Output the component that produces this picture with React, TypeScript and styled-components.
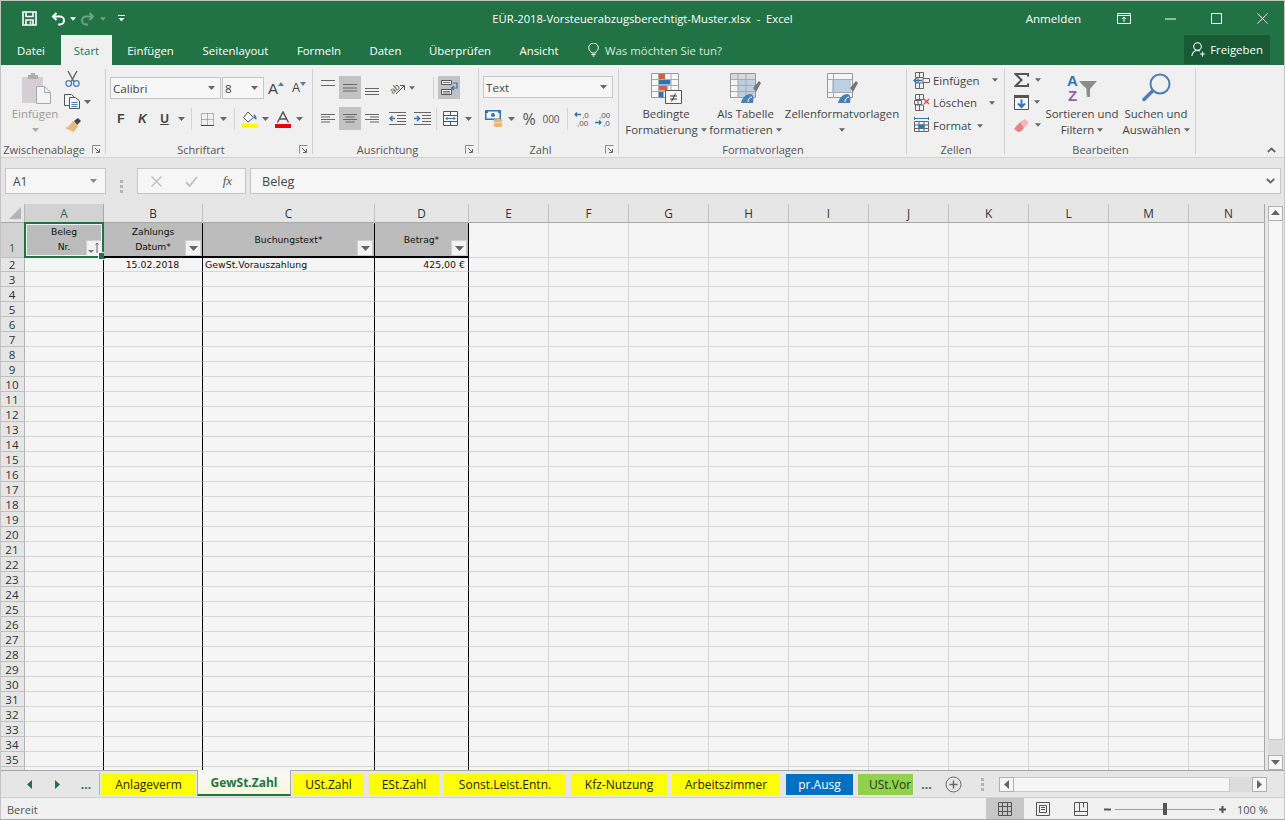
import React from "react";
import styled, { createGlobalStyle } from "styled-components";

const UI = `"Open Sans", "Noto Sans", "Liberation Sans", sans-serif`;
const GREEN = "#217346";

const Global = createGlobalStyle`
  html, body { margin: 0; padding: 0; overflow: hidden; background: #f0f0f0; }
  #root { width: 1285px; height: 820px; }
  * { box-sizing: border-box; }
`;

const Window = styled.div`
  position: relative; width: 1285px; height: 820px; display: flex; flex-direction: column;
  font-family: ${UI}; color: #444; overflow: hidden; background: #f0f0f0;
  &::after { content: ""; position: absolute; inset: 0; border: 1px solid #c4c4c4; border-bottom-color: #a8a8a8; pointer-events: none; }
`;

/* ---------- title ---------- */
const TitleBar = styled.header`
  height: 35px; flex: none; background: ${GREEN}; display: grid; grid-template-columns: 1fr auto 1fr;
  align-items: center; color: #fff; padding-top: 2px;
`;
const Quick = styled.div`display: flex; align-items: center; padding-left: 22px;`;
const QSlot = styled.span<{ $w: number; $dim?: boolean }>`
  width: ${p => p.$w}px; display: flex; justify-content: center; align-items: center; opacity: ${p => (p.$dim ? 0.35 : 1)};
`;
const WinTitle = styled.div`font-size: 11.2px; white-space: pre; color: #fff; margin-top: -1px;`;
const WinRight = styled.div`display: flex; align-items: center; justify-content: flex-end;`;
const SignIn = styled.span`font-size: 11.6px; margin-right: 20px;`;
const WinBtn = styled.span<{ $w: number }>`width: ${p => p.$w}px; display: flex; justify-content: center;`;

const TabsBar = styled.nav`
  height: 30px; flex: none; background: ${GREEN}; display: flex; align-items: stretch; color: #fff; padding: 0 15px 0 1px;
`;
const RTab = styled.div<{ $w: number; $on?: boolean }>`
  width: ${p => p.$w}px; display: flex; align-items: center; justify-content: center; font-size: 11.4px;
  background: ${p => (p.$on ? "#f0f0f0" : "transparent")}; color: ${p => (p.$on ? GREEN : "#fff")};
`;
const TellMe = styled.div`
  display: flex; align-items: center; gap: 6px; margin-left: 15px; font-size: 11.4px; color: #d8e8de; flex: 1;
`;
const Share = styled.div`
  width: 86px; background: #185a36; display: flex; align-items: center; justify-content: center; gap: 4px; font-size: 11.4px; margin-bottom: 1px;
`;

/* ---------- ribbon ---------- */
const Ribbon = styled.section`
  height: 93px; flex: none; display: flex; background: #f0f0f0; border-bottom: 1px solid #d2d2d2; padding: 4px 0 3px;
`;
const Group = styled.div<{ $w: number }>`
  width: ${p => p.$w}px; flex: none; display: flex; flex-direction: column; margin-right: 1px; border-right: 1px solid #d0d0d0;
`;
const GroupBody = styled.div<{ $pl?: number; $pt?: number }>`
  height: 72px; flex: none; display: flex; padding-left: ${p => p.$pl ?? 0}px; padding-top: ${p => p.$pt ?? 0}px;
`;
const GroupFoot = styled.div<{ $launch?: boolean }>`
  display: grid; grid-template-columns: ${p => (p.$launch ? "1fr 17px" : "1fr")}; align-items: center; height: 14px; margin-top: 1px;
  font-size: 11px; color: #555; text-align: center; white-space: nowrap;
`;
const Launcher = styled.span`display: flex; justify-content: center; padding-right: 1px;`;
const Stack = styled.div<{ $gap?: number; $w?: number }>`
  display: flex; flex-direction: column; gap: ${p => p.$gap ?? 0}px; ${p => (p.$w ? `width:${p.$w}px;` : "")}
`;
const Row = styled.div<{ $h?: number }>`display: flex; align-items: center; height: ${p => p.$h ?? 22}px;`;
const Slot = styled.span<{ $w: number; $on?: boolean; $h?: number }>`
  width: ${p => p.$w}px; height: ${p => p.$h ?? 23}px; flex: none; display: flex; align-items: center; justify-content: center;
  background: ${p => (p.$on ? "#c2c2c2" : "transparent")};
`;
const Divider = styled.span`width: 1px; height: 22px; background: #d4d4d4; flex: none;`;
const Combo = styled.div<{ $w: number }>`
  width: ${p => p.$w}px; height: 22px; background: #f6f6f6; border: 1px solid #c6c6c6; flex: none;
  display: flex; align-items: center; justify-content: space-between; padding: 0 5px 0 2px; font-size: 11.6px; color: #444;
`;
const GlyphBtn = styled.span<{ $style?: string }>`
  font-size: 12px; font-weight: 700; color: #444; font-family: "Liberation Sans", sans-serif; ${p => p.$style ?? ""}
`;
const BigBtn = styled.div<{ $w: number; $ml?: number; $dim?: boolean }>`
  width: ${p => p.$w}px; margin-left: ${p => p.$ml ?? 0}px; flex: none; display: flex; flex-direction: column; align-items: center;
  font-size: 11.4px; line-height: 16px; color: ${p => (p.$dim ? "#9a9a9a" : "#444")}; white-space: nowrap; text-align: center;
`;
const BigIcon = styled.span<{ $pt?: number; $dx?: number }>`
  height: ${p => 31 + (p.$pt ?? 0)}px; padding-top: ${p => p.$pt ?? 0}px; padding-left: ${p => p.$dx ?? 0}px;
  display: flex; align-items: flex-start; justify-content: center; margin-bottom: 2px;
`;
const Line = styled.span`display: flex; align-items: center; justify-content: center; gap: 3px; height: 16px;`;
const ListRow = styled.div<{ $gapEnd: number }>`
  display: flex; align-items: center; height: 23px; font-size: 11.4px; gap: 3px; color: #444;
  &:first-child { height: 22px; }
  & > :last-child { margin-left: ${p => p.$gapEnd}px; }
`;
const Collapse = styled.div`flex: 1; display: flex; align-items: flex-end; justify-content: flex-end; padding: 0 9px 1px 0;`;

/* ---------- formula ---------- */
const FormulaBar = styled.div`
  height: 46px; flex: none; background: #e6e6e6; display: flex; align-items: flex-start; padding: 10px 4px 0 5px;
`;
const NameBox = styled.div`
  width: 101px; height: 26px; background: #f6f6f6; border: 1px solid #c6c6c6; display: flex; align-items: center; justify-content: space-between;
  padding: 0 7px 0 7px; font-size: 12px; color: #444;
`;
const FxDots = styled.span`width: 31px; display: flex; justify-content: center; align-self: center;`;
const FxBox = styled.div`
  width: 109px; height: 26px; background: #f6f6f6; border: 1px solid #c6c6c6; display: flex; align-items: center; padding-left: 1px; gap: 0;
`;
const FxSlot = styled.span`width: 36px; display: flex; justify-content: center; align-items: center; color: #555; font: italic 13px "Liberation Serif", serif;`;
const FormulaInput = styled.div`
  flex: 1; height: 26px; margin-left: 4px; background: #f6f6f6; border: 1px solid #c6c6c6; display: flex; align-items: center; justify-content: space-between;
  padding: 0 5px 0 11px; font-size: 12.6px; color: #444;
`;

/* ---------- sheet ---------- */
const SheetWrap = styled.div`height: 567px; flex: none; display: flex; background: #e6e6e6; border-bottom: 1px solid #a6a6a6;`;
const GridClip = styled.div`width: 1265px; height: 566px; overflow: hidden; flex: none; border-right: 1px solid #a8a8a8;`;
const Grid = styled.div`
  display: grid;
  grid-template-columns: 25px 79px 99px 172px 94px repeat(10, 80px);
  grid-template-rows: 19px 35px 14px repeat(34, 15px);
  background: #f5f5f5;
`;
const Corner = styled.div`
  background: #e6e6e6; border-right: 1px solid #b5b5b5; border-bottom: 1px solid #a8a8a8; display: flex; align-items: flex-end; justify-content: flex-end; padding: 0 3px 3px 0;
`;
const ColHead = styled.div<{ $sel?: boolean }>`
  background: ${p => (p.$sel ? "#d2d2d2" : "#e6e6e6")}; color: ${p => (p.$sel ? GREEN : "#333")};
  border-right: 1px solid ${p => (p.$sel ? "#a8a8a8" : "#c0c0c0")}; border-bottom: 1px solid #a8a8a8;
  display: flex; align-items: center; justify-content: center; font-size: 11.8px;
`;
const RowHead = styled.div<{ $sel?: boolean }>`
  background: ${p => (p.$sel ? "#d2d2d2" : "#e6e6e6")}; color: ${p => (p.$sel ? GREEN : "#333")};
  border-right: 1px solid #b5b5b5; border-bottom: 1px solid #c0c0c0; padding-bottom: ${p => (p.$sel ? 3 : 0)}px;
  display: flex; align-items: flex-end; justify-content: center; font-size: 11.6px; line-height: 12px;
`;
const Cell = styled.div<{ $black?: boolean }>`
  border-right: 1px solid ${p => (p.$black ? "#000" : "#d6d6d6")}; border-bottom: 1px solid #d6d6d6;
  font: 9.4px/14px "DejaVu Sans", sans-serif; color: #111; white-space: nowrap; overflow: hidden; display: flex; align-items: center; padding: 0 2px;
`;
const DataCell = styled(Cell) <{ $al?: string }>`justify-content: ${p => p.$al ?? "flex-start"}; padding: 1px 3px 0 2px;`;
const HeadCell = styled.div`
  position: relative; background: #bcbcbc; border-right: 1px solid #000; border-bottom: 2px solid #000;
  font: 9.2px/15px "DejaVu Sans", sans-serif; color: #111; text-align: center; display: flex; flex-direction: column; justify-content: center; padding-bottom: 1px;
`;
const Filter = styled.span`
  position: absolute; right: 1px; bottom: 0; width: 16px; height: 16px; background: #f2f2f2; border: 1px solid #cfcfcf; display: flex; align-items: center; justify-content: center;
`;
const Selection = styled.div`
  position: absolute; left: -1px; top: -1px; width: 80px; height: 36px; border: 2px solid ${GREEN}; box-shadow: inset 0 0 0 1px #f4f4f4; pointer-events: none;
  &::after { content: ""; position: absolute; right: -4px; bottom: -4px; width: 6px; height: 6px; background: ${GREEN}; border: 1px solid #fff; }
`;

const VScroll = styled.div`flex: 1; display: flex; flex-direction: column; padding: 2px 2px 0 3px;`;
const SBtn = styled.div`height: 15px; background: #f6f6f6; border: 1px solid #b0b0b0; display: flex; align-items: center; justify-content: center; flex: none;`;
const VThumb = styled.div`flex: 1; background: #f6f6f6; border: 1px solid #c8c8c8; border-top: none;`;
const VTrack = styled.div`height: 15px; background: #dcdcdc; flex: none;`;

/* ---------- sheet tabs ---------- */
const TabBar = styled.div`height: 26px; flex: none; display: flex; align-items: stretch; background: #e6e6e6; font-size: 12px;`;
const NavSlot = styled.span<{ $w: number }>`width: ${p => p.$w}px; display: flex; align-items: center; justify-content: center; color: ${GREEN}; font-weight: 700; font-size: 12px; flex: none;`;
const TabSep = styled.span`width: 1px; height: 22px; background: #b0b0b0; align-self: center; flex: none;`;
const Sheet = styled.div<{ $w: number; $bg?: string; $fg?: string; $ml?: number; $cut?: boolean }>`
  width: ${p => p.$w}px; flex: none; margin: 3px 0 2px ${p => p.$ml ?? 2}px; background: ${p => p.$bg ?? "#ffff00"}; color: ${p => p.$fg ?? "#222"};
  display: flex; align-items: center; justify-content: ${p => (p.$cut ? "flex-start" : "center")}; padding-left: ${p => (p.$cut ? 11 : 0)}px;
  font-size: 12px; white-space: nowrap; overflow: hidden;
`;
const ActiveSheet = styled.div<{ $w: number }>`
  width: ${p => p.$w}px; flex: none; margin-left: 2px; background: linear-gradient(#f7f7f7, #f7f7dc); color: ${GREEN}; font-weight: 700; font-size: 12px;
  border-bottom: 2px solid ${GREEN}; border-left: 1px solid #a8a8a8; border-right: 1px solid #a8a8a8; margin-top: -1px; height: 26px;
  display: flex; align-items: center; justify-content: center;
`;
const HScroll = styled.div`width: 268px; margin-left: 2px; flex: none; display: flex; align-items: center;`;
const HBtn = styled.div`width: 15px; height: 15px; background: #f6f6f6; border: 1px solid #b0b0b0; display: flex; align-items: center; justify-content: center; flex: none;`;
const HThumb = styled.div`width: 216px; height: 15px; background: #f6f6f6; border: 1px solid #c8c8c8; border-left: none; flex: none;`;
const HTrack = styled.div`flex: 1; height: 15px; background: #dcdcdc;`;

/* ---------- status ---------- */
const Status = styled.footer`
  flex: 1; display: flex; align-items: stretch; background: #f0f0f0; border-top: 1px solid #d0d0d0; font-size: 11px; color: #555; padding-left: 7px;
`;
const StatusText = styled.span`align-self: center; flex: 1;`;
const ViewBtn = styled.span<{ $on?: boolean; $w: number }>`
  width: ${p => p.$w}px; background: ${p => (p.$on ? "#c6c6c6" : "transparent")}; display: flex; align-items: center; justify-content: center;
`;
const ZoomWrap = styled.div`display: flex; align-items: center; margin-left: 4px; width: 130px; gap: 2px;`;
const ZoomTrack = styled.div`position: relative; width: 100px; height: 1px; background: #9a9a9a; flex: none; margin: 0 2px;`;
const ZoomThumb = styled.span`position: absolute; left: 48px; top: -6px; width: 4px; height: 12px; background: #555;`;
const ZoomVal = styled.span`width: 51px; align-self: center; padding-left: 3px; flex: none; font-size: 11px;`;
const MiniTri = styled.svg`align-self: flex-start; margin: 5px 0 0 0;`;

/* ---------- icons ---------- */
const Caret = ({ c = "#666", s = 7 }: { c?: string; s?: number }) => (
  <svg width={s} height={4} viewBox="0 0 7 4"><path d="M0 0h7L3.500 4z" fill={c} /></svg>
);
const Launch = () => (
  <svg width="9" height="9" viewBox="0 0 9 9"><path d="M.5 8.500V.5h8" fill="none" stroke="#8a8a8a" /><path d="M3 3l4 4M7.500 4v3.500H4" fill="none" stroke="#666" /></svg>
);
const Save = () => (
  <svg width="15" height="15" viewBox="0 0 15 15" fill="none" stroke="#fff" strokeWidth="1.600">
    <path d="M1 1h13v13H1z" /><path d="M4 1v4.500h7V1" /><path d="M4 14V9h7v5" /><path d="M8.500 10.500v2.500" />
  </svg>
);
const Undo = ({ c = "#fff", flip = false }: { c?: string; flip?: boolean }) => (
  <svg width="15" height="14" viewBox="0 0 15 14" fill="none" stroke={c} strokeWidth="2" style={flip ? { transform: "scaleX(-1)" } : undefined}>
    <path d="M5.500 1L2 4.500 5.500 8" /><path d="M2.500 4.500H9a4 4 0 0 1 0 8H7" />
  </svg>
);
const Customize = () => (
  <svg width="7" height="7" viewBox="0 0 7 7"><path d="M0 .5h7" stroke="#fff" /><path d="M.5 3h6L3.500 6.500z" fill="#fff" /></svg>
);
const Restore = () => (
  <svg width="14" height="11" viewBox="0 0 14 11" fill="none" stroke="#fff"><path d="M.5.500h13v10H.5z" /><path d="M.5 2.500h13" /><path d="M7 9V4M5 6l2-2 2 2" /></svg>
);
const Minimize = () => <svg width="11" height="2" viewBox="0 0 11 2"><path d="M0 1h11" stroke="#fff" /></svg>;
const Maximize = () => <svg width="11" height="11" viewBox="0 0 11 11"><path d="M.5.500h10v10H.5z" fill="none" stroke="#fff" /></svg>;
const Close = () => <svg width="11" height="11" viewBox="0 0 11 11"><path d="M.5.500l10 10M10.500.500l-10 10" stroke="#fff" fill="none" /></svg>;
const Bulb = () => (
  <svg width="11" height="14" viewBox="0 0 11 14" fill="none" stroke="#fff"><path d="M3.500 10C3 8 .7 7.500.7 4.800a4.800 4.800 0 0 1 9.600 0C10.300 7.500 8 8 7.500 10z" /><path d="M3.500 11.500h4M4.500 13h2" /></svg>
);
const Person = () => (
  <svg width="15" height="15" viewBox="0 0 15 15" fill="none" stroke="#fff" strokeWidth="1.100"><circle cx="6.500" cy="4.500" r="3.800" /><path d="M.8 14c.6-3.500 2.700-5.500 5.700-5.500 1 0 1.800.2 2.500.6" /><path d="M11.500 9.500v5M9 12h5" /></svg>
);
const Paste = () => (
  <svg width="29" height="31" viewBox="0 0 29 31">
    <path d="M0 4h21v26H0z" fill="#d3cfd3" /><path d="M6 2h3V0h4v2h3v4H6z" fill="#b0acb0" />
    <path d="M14.500 13.500h8l6 6v11h-14z" fill="#f4f4f4" stroke="#a8a8a8" /><path d="M22.500 13.500v6h6" fill="none" stroke="#a8a8a8" />
  </svg>
);
const Cut = () => (
  <svg width="15" height="16" viewBox="0 0 15 16" fill="none">
    <path d="M3 0l6 11M12 0L6 11" stroke="#666" strokeWidth="1.400" /><circle cx="3.700" cy="12.500" r="2.800" stroke="#4a7fb5" strokeWidth="1.300" /><circle cx="11.300" cy="12.500" r="2.800" stroke="#4a7fb5" strokeWidth="1.300" />
  </svg>
);
const Copy = () => (
  <svg width="16" height="15" viewBox="0 0 16 15" fill="#f4f4f4" stroke="#555">
    <path d="M.5.500h7l3 3v8H.5z" /><path d="M5.500 3.500h6l4 3.500v7.500h-10z" /><path d="M7.500 8.500h6M7.500 10.500h6M7.500 12.500h6" stroke="#4a7fb5" />
  </svg>
);
const Brush = () => (
  <svg width="17" height="14" viewBox="0 0 17 14">
    <path d="M10 3l4-3 3 3-4 4z" fill="#444" /><path d="M9 3l5 5-4 6-9-4 3-1z" fill="#e5b77b" />
  </svg>
);
const Borders = () => (
  <svg width="13" height="13" viewBox="0 0 13 13" fill="none" stroke="#777" strokeDasharray="1 1"><path d="M.5.500h12v12H.5z" /><path d="M6.500.500v12M.5 6.500h12" /><path d="M0 12.500h13" stroke="#444" strokeDasharray="none" /></svg>
);
const Fill = () => (
  <svg width="16" height="17" viewBox="0 0 16 17"><path d="M6 1l5.500 5.500L6 11 1.500 6.500z" fill="#f6f6f6" stroke="#555" /><path d="M12 3c2 1.500 3 4 2.500 5.500-1.500 0-2.500-1-3-2z" fill="#4a7fb5" /><path d="M0 13h16v4H0z" fill="#ffff00" /></svg>
);
const FontColor = () => (
  <svg width="16" height="17" viewBox="0 0 16 17"><path d="M2.500 11.500L8 1l5.500 10.500M4.500 8h7" fill="none" stroke="#555" strokeWidth="1.500" /><path d="M0 13h16v4H0z" fill="#e8000b" /></svg>
);
const Lines = ({ kind }: { kind: "top" | "mid" | "bot" | "l" | "c" | "r" }) => {
  const rows: [number, number][] =
    kind === "top" ? [[.5, 14], [5.500, 14]] :
      kind === "mid" ? [[4.500, 14], [8, 14], [11, 14]] :
        kind === "bot" ? [[8.500, 14], [11.500, 14], [14.500, 14]] :
          [[3.500, 14], [6, 9], [8.500, 14], [11, 9]];
  return (
    <svg width="14" height="15" viewBox="0 0 14 15">
      {rows.map(([y, l], i) => {
        const x = kind === "r" ? 14 - l : kind === "c" ? (14 - l) / 2 : 0;
        return <path key={i} d={`M${x} ${y}h${l}`} stroke="#666" />;
      })}
    </svg>
  );
};
const Orient = () => (
  <svg width="17" height="15" viewBox="0 0 17 15" fill="none"><text x="1" y="12" fontSize="9" fontFamily="Liberation Sans" fill="#555" transform="rotate(-40 6 8)">ab</text><path d="M8 14l8-8M12 5.500h4.500V10" stroke="#555" /></svg>
);
const Wrap = () => (
  <svg width="17" height="16" viewBox="0 0 17 16" fill="none"><path d="M.5.500h10v4H.5zM.5 9.500h10v5H.5z" stroke="#555" fill="#f0f0f0" /><path d="M2 2.500h7M2 11.500h7M2 13h7" stroke="#777" /><path d="M12 3h4v5h-5M13 6l-2.500 2 2.500 2" stroke="#2f75b5" strokeWidth="1.200" /></svg>
);
const Indent = ({ dir }: { dir: "in" | "out" }) => (
  <svg width="17" height="13" viewBox="0 0 17 13" fill="none" stroke="#666">
    <path d="M0 .5h17M8 3.500h9M8 6.500h9M8 9.500h9M0 12.500h17" />
    <path d={dir === "out" ? "M6 6.500H1M3.500 4L1 6.500 3.500 9" : "M0 6.500h5M3 4l2.500 2.500L3 9"} stroke="#2f75b5" strokeWidth="1.500" />
  </svg>
);
const Merge = () => (
  <svg width="15" height="15" viewBox="0 0 15 15" fill="#f6f6f6" stroke="#555"><path d="M.5.500h14v14H.5z" /><path d="M.5 4.500h14M.5 10.500h14M7.500.500v4M7.500 10.500v4" /><path d="M3 7.500h9M4.500 6L3 7.500 4.500 9M10.500 6L12 7.500 10.500 9" stroke="#2f75b5" /></svg>
);
const Currency = () => (
  <svg width="18" height="17" viewBox="0 0 18 17">
    <path d="M0 0h16v10H0z" fill="#2f75b5" /><path d="M1.500 1.500h13v7h-13z" fill="#f4f4f4" /><path d="M0 0h3v3H0zM13 0h3v3h-3z" fill="#2f75b5" /><circle cx="8" cy="5" r="2" fill="#2f75b5" />
    <ellipse cx="13" cy="10.500" rx="4.500" ry="1.800" fill="#e9b56b" /><ellipse cx="13" cy="13" rx="4.500" ry="1.800" fill="#f1c88f" /><ellipse cx="13" cy="15.200" rx="4.500" ry="1.800" fill="#e9b56b" />
  </svg>
);
const Decimal = ({ inc }: { inc: boolean }) => (
  <svg width="18" height="16" viewBox="0 0 18 16" fill="none">
    <text x={inc ? 8 : 4} y="7" fontSize="8" fontFamily="Liberation Sans" fill="#555">{inc ? ",0" : ",00"}</text>
    <text x={inc ? 3 : 8} y="15" fontSize="8" fontFamily="Liberation Sans" fill="#555">{inc ? ",00" : ",0"}</text>
    <path d={inc ? "M7 3.500H1M3 1.500L1 3.500l2 2" : "M0 11.500h6M4 9.500l2 2-2 2"} stroke="#2f75b5" strokeWidth="1.300" />
  </svg>
);
const CondFormat = () => (
  <svg width="31" height="32" viewBox="0 0 31 32">
    <path d="M.5.500h27v24H.5z" fill="#f7f7f7" stroke="#999" />
    <path d="M7.500 1h6.500v5H7.500z" fill="#d2613f" /><path d="M7.500 6.500h12v5H7.500z" fill="#2f75b5" /><path d="M7.500 12.500h9v5H7.500z" fill="#d2613f" /><path d="M7.500 18.500h5v6H7.500z" fill="#2f75b5" />
    <path d="M7.500 1v24M20 1v24M1 6.500h26M1 12.500h26M1 18.500h26" stroke="#aaa" fill="none" />
    <path d="M14.500 17.500h16v13h-16z" fill="#f7f7f7" stroke="#555" /><path d="M19 23h7M19 26h7M24.500 20.500l-4 8" stroke="#333" fill="none" />
  </svg>
);
const TableFmt = ({ cells }: { cells?: boolean }) => (
  <svg width="31" height="31" viewBox="0 0 31 31">
    <path d="M.5.500h25v24H.5z" fill="#f4f4f4" stroke="#999" />
    {cells
      ? <path d="M5 6h19v14H5z" fill="#bccfe3" />
      : <><path d="M8 7h17v17H8z" fill="#bccfe3" /><path d="M1 1h24v5.500H1z" fill="#d9d9d9" /></>}
    <path d={cells ? "M6.500 1v24M1 6.500h24M1 19.500h24" : "M8 1v24M16 1v24M1 6.500h24M1 12.500h24M1 18.500h24"} stroke="#aaa" fill="none" />
    <path d="M11 30c1-5 5-9 9-9 3 0 4 3 3 9z" fill="#4a7fb5" /><path d="M18 29c0-3 2-5 4-5" stroke="#fff" fill="none" />
    <path d="M23 15l6-7 2 2-5 9z" fill="#777" />
  </svg>
);
const CellsIcon = ({ kind }: { kind: "ins" | "del" | "fmt" }) => (
  <svg width="17" height="17" viewBox="0 0 17 17" fill="none" stroke="#666">
    {kind === "fmt" ? (
      <>
        <path d="M1.500 4.500h14v10h-14zM6 4.500v10M11 4.500v10M1.500 8h14M1.500 11.500h14" /><path d="M6 8h5v3.500H6z" fill="#2f75b5" stroke="#2f75b5" />
        <path d="M1.500 1.500h14" stroke="#2f75b5" /><path d="M1.500 0v3M15.500 0v3" stroke="#2f75b5" />
      </>
    ) : (
      <>
        <path d="M2.500.500h8v5h-8zM6.500.500v5M2.500 11h8v5.500h-8zM6.500 11v5.500M5 6v5" />
        {kind === "ins"
          ? <><path d="M9 8.500H1M3.500 6L1 8.500 3.500 11" stroke="#2f75b5" strokeWidth="1.300" /><path d="M10 6.500h6.500v4H10z" /></>
          : <><path d="M1.500 6.500h7v4h-7z" /><path d="M11 5l5 5M16 5l-5 5" stroke="#d9534f" strokeWidth="1.500" /></>}
      </>
    )}
  </svg>
);
const Sigma = () => <svg width="15" height="14" viewBox="0 0 15 14"><path d="M14 3.500V1H1.500L7.500 7 1.500 13H14v-2.500" fill="none" stroke="#555" strokeWidth="2" /></svg>;
const FillDown = () => (
  <svg width="15" height="15" viewBox="0 0 15 15"><path d="M0 0h15v15H0z" fill="#f4f4f4" /><path d="M.5.500h14v14H.5z" fill="none" stroke="#555" /><path d="M0 0h15v3H0z" fill="#555" /><path d="M7.500 4.500v7M4 8.500l3.500 3.500L11 8.500" fill="none" stroke="#2f75b5" strokeWidth="2" /></svg>
);
const Eraser = () => (
  <svg width="15" height="13" viewBox="0 0 15 13"><path d="M6 3l5-3 4 4-5 5z" fill="#f5b5bd" /><path d="M6 3l4 6-3 3.500-3 .5-4-3z" fill="#e87f8b" /></svg>
);
const SortFilter = () => (
  <svg width="30" height="31" viewBox="0 0 30 31">
    <text x="0" y="13" fontSize="15" fontWeight="700" fontFamily="Liberation Sans" fill="#2f75b5">A</text>
    <text x="1" y="28" fontSize="15" fontWeight="700" fontFamily="Liberation Sans" fill="#8e5fb0">Z</text>
    <path d="M12 8h18l-7 8v8h-4v-8z" fill="#8c8c8c" /><path d="M17 13.500l2 2.500v7h1.500" fill="none" stroke="#f4f4f4" />
  </svg>
);
const Search = () => (
  <svg width="29" height="29" viewBox="0 0 29 29" fill="none"><circle cx="18" cy="11" r="9.500" stroke="#4a7fb5" strokeWidth="2" /><path d="M10.500 18L2 26.500" stroke="#4a7fb5" strokeWidth="3.500" strokeLinecap="round" /></svg>
);
const Chevron = ({ up }: { up?: boolean }) => (
  <svg width="9" height="6" viewBox="0 0 9 6" style={up ? { transform: "scaleY(-1)" } : undefined}><path d="M.8 1l3.700 3.500L8.200 1" fill="none" stroke="#666" strokeWidth="1.800" /></svg>
);
const Dots = () => (
  <svg width="3" height="13" viewBox="0 0 3 13" fill="#b4b4b4"><path d="M0 0h3v3H0zM0 5h3v3H0zM0 10h3v3H0z" /></svg>
);
const Tri = ({ dir, c = "#666" }: { dir: "u" | "d" | "l" | "r"; c?: string }) => {
  const d = { u: "M0 6h9L4.500 1z", d: "M0 2h9L4.500 7z", l: "M7 0v9L2 4.500z", r: "M2 0v9l5-4.500z" }[dir];
  return <svg width="9" height="9" viewBox="0 0 9 9"><path d={d} fill={c} /></svg>;
};
const SizeCaret = ({ down }: { down?: boolean }) => (
  <MiniTri width="6" height="4" viewBox="0 0 6 4"><path d={down ? "M0 0h6L3 4z" : "M0 4h6L3 0z"} fill="#4a7fb5" /></MiniTri>
);
const SortedFilter = () => (
  <svg width="14" height="14" viewBox="0 0 14 14"><path d="M1 9h6L4 12z" fill="#777" /><path d="M10 12V2M8.500 3.500L10 2l1.500 1.500" fill="none" stroke="#666" /></svg>
);
const PlusCircle = () => (
  <svg width="17" height="17" viewBox="0 0 17 17" fill="none" stroke="#666"><circle cx="8.500" cy="8.500" r="7.500" /><path d="M8.500 4.500v8M4.500 8.500h8" strokeWidth="1.500" /></svg>
);
const NormalView = () => (
  <svg width="14" height="14" viewBox="0 0 14 14" fill="none" stroke="#555"><path d="M.5.500h13v13H.5zM4.500.500v13M9.500.500v13M.5 4.500h13M.5 9.500h13" /></svg>
);
const LayoutView = () => (
  <svg width="14" height="14" viewBox="0 0 14 14" fill="none" stroke="#555"><path d="M.5.500h13v13H.5zM3.500 3.500h7v7h-7zM5 5.500h4M5 7.500h4" /></svg>
);
const BreakView = () => (
  <svg width="14" height="14" viewBox="0 0 14 14" fill="none" stroke="#555"><path d="M.5.500h13v13H.5zM.5 9.500h13M5.500.500v9M9.500.500v5" /></svg>
);
const ZoomMinus = () => <svg width="7" height="3" viewBox="0 0 7 3"><path d="M0 1.500h7" stroke="#555" strokeWidth="2" /></svg>;
const ZoomPlus = () => <svg width="7" height="7" viewBox="0 0 7 7"><path d="M0 3.500h7M3.500 0v7" stroke="#555" strokeWidth="2" /></svg>;

/* ---------- data ---------- */
const COLS = ["A", "B", "C", "D", "E", "F", "G", "H", "I", "J", "K", "L", "M", "N"];
const RTABS = [["Datei", 60], ["Start", 51], ["Einfügen", 77], ["Seitenlayout", 93], ["Formeln", 74], ["Daten", 59], ["Überprüfen", 90], ["Ansicht", 68]] as const;
const SHEETS: { t: string; w: number; bg?: string; fg?: string; ml?: number; cut?: boolean }[] = [
  { t: "USt.Zahl", w: 71 },
  { t: "ESt.Zahl", w: 70, ml: 5 },
  { t: "Sonst.Leist.Entn.", w: 122, ml: 5 },
  { t: "Kfz-Nutzung", w: 96, ml: 5 },
  { t: "Arbeitszimmer", w: 108, ml: 5 },
  { t: "pr.Ausg", w: 67, bg: "#0070c0", fg: "#fff", ml: 6 },
  { t: "USt.Vor", w: 55, bg: "#92d050", fg: "#1a3a10", ml: 5, cut: true },
];

export default function App() {
  return (
    <Window>
      <Global />
      <TitleBar>
        <Quick>
          <QSlot $w={15}><Save /></QSlot>
          <QSlot $w={14} />
          <QSlot $w={15}><Undo /></QSlot>
          <QSlot $w={14}><Caret c="#fff" s={6} /></QSlot>
          <QSlot $w={15} $dim><Undo flip /></QSlot>
          <QSlot $w={15} $dim><Caret c="#fff" s={6} /></QSlot>
          <QSlot $w={23}><Customize /></QSlot>
        </Quick>
        <WinTitle>EÜR-2018-Vorsteuerabzugsberechtigt-Muster.xlsx  -  Excel</WinTitle>
        <WinRight>
          <SignIn>Anmelden</SignIn>
          <WinBtn $w={46}><Restore /></WinBtn>
          <WinBtn $w={46}><Minimize /></WinBtn>
          <WinBtn $w={46}><Maximize /></WinBtn>
          <WinBtn $w={46}><Close /></WinBtn>
        </WinRight>
      </TitleBar>

      <TabsBar>
        {RTABS.map(([t, w]) => <RTab key={t} $w={w} $on={t === "Start"}>{t}</RTab>)}
        <TellMe><Bulb />Was möchten Sie tun?</TellMe>
        <Share><Person />Freigeben</Share>
      </TabsBar>

      <Ribbon>
        <Group $w={106}>
          <GroupBody>
            <BigBtn $w={50} $ml={10} $dim>
              <BigIcon $pt={4} $dx={3}><Paste /></BigIcon>
              <Line>Einfügen</Line>
              <Line><Caret c="#aaa" /></Line>
            </BigBtn>
            <Stack>
              <Row $h={20}><Slot $w={24}><Cut /></Slot></Row>
              <Row $h={25}><Slot $w={24}><Copy /></Slot><Caret /></Row>
              <Row $h={22}><Slot $w={24}><Brush /></Slot></Row>
            </Stack>
          </GroupBody>
          <GroupFoot $launch><span>Zwischenablage</span><Launcher><Launch /></Launcher></GroupFoot>
        </Group>

        <Group $w={206}>
          <GroupBody $pl={3} $pt={8}>
            <Stack $gap={9}>
              <Row>
                <Combo $w={111}>Calibri<Caret /></Combo>
                <Slot $w={1} />
                <Combo $w={42}>8<Caret /></Combo>
                <Slot $w={24}><GlyphBtn $style="font-size:15px;font-weight:400;">A</GlyphBtn><SizeCaret /></Slot>
                <Slot $w={22}><GlyphBtn $style="font-size:12px;font-weight:400;">A</GlyphBtn><SizeCaret down /></Slot>
              </Row>
              <Row>
                <Slot $w={22}><GlyphBtn>F</GlyphBtn></Slot>
                <Slot $w={21}><GlyphBtn $style="font-style:italic;">K</GlyphBtn></Slot>
                <Slot $w={23}><GlyphBtn $style="text-decoration:underline;">U</GlyphBtn></Slot>
                <Slot $w={10}><Caret /></Slot>
                <Slot $w={5} /><Divider /><Slot $w={6} />
                <Slot $w={18}><Borders /></Slot>
                <Slot $w={14}><Caret /></Slot>
                <Slot $w={4} /><Divider /><Slot $w={5} />
                <Slot $w={19}><Fill /></Slot>
                <Slot $w={12}><Caret /></Slot>
                <Slot $w={3} />
                <Slot $w={18}><FontColor /></Slot>
                <Slot $w={14}><Caret /></Slot>
              </Row>
            </Stack>
          </GroupBody>
          <GroupFoot $launch><span>Schriftart</span><Launcher><Launch /></Launcher></GroupFoot>
        </Group>

        <Group $w={165}>
          <GroupBody $pl={3} $pt={7}>
            <Stack $gap={8}>
              <Row $h={23}>
                <Slot $w={22}><Lines kind="top" /></Slot>
                <Slot $w={22} $on><Lines kind="mid" /></Slot>
                <Slot $w={22}><Lines kind="bot" /></Slot>
                <Slot $w={26}><Orient /></Slot>
                <Slot $w={6}><Caret s={6} /></Slot>
                <Slot $w={18} /><Divider /><Slot $w={4} />
                <Slot $w={22} $on><Wrap /></Slot>
              </Row>
              <Row $h={23}>
                <Slot $w={22}><Lines kind="l" /></Slot>
                <Slot $w={22} $on><Lines kind="c" /></Slot>
                <Slot $w={22}><Lines kind="r" /></Slot>
                <Slot $w={28}><Indent dir="out" /></Slot>
                <Slot $w={22}><Indent dir="in" /></Slot>
                <Slot $w={3} /><Divider /><Slot $w={3} />
                <Slot $w={21}><Merge /></Slot>
                <Slot $w={14}><Caret /></Slot>
              </Row>
            </Stack>
          </GroupBody>
          <GroupFoot $launch><span>Ausrichtung</span><Launcher><Launch /></Launcher></GroupFoot>
        </Group>

        <Group $w={139}>
          <GroupBody $pl={3} $pt={7}>
            <Stack $gap={9}>
              <Combo $w={130}>Text<Caret /></Combo>
              <Row $h={23}>
                <Slot $w={21}><Currency /></Slot>
                <Slot $w={14}><Caret /></Slot>
                <Slot $w={1} />
                <Slot $w={20}><GlyphBtn $style={`font:400 16px ${UI};color:#555;`}>%</GlyphBtn></Slot>
                <Slot $w={24}><GlyphBtn $style={`font:400 10px ${UI};color:#555;`}>000</GlyphBtn></Slot>
                <Slot $w={4} /><Divider /><Slot $w={6} />
                <Slot $w={18}><Decimal inc /></Slot>
                <Slot $w={3} />
                <Slot $w={18}><Decimal inc={false} /></Slot>
              </Row>
            </Stack>
          </GroupBody>
          <GroupFoot $launch><span>Zahl</span><Launcher><Launch /></Launcher></GroupFoot>
        </Group>

        <Group $w={287}>
          <GroupBody $pt={4}>
            <BigBtn $w={80} $ml={6}>
              <BigIcon><CondFormat /></BigIcon>
              <Line>Bedingte</Line>
              <Line>Formatierung<Caret s={6} /></Line>
            </BigBtn>
            <BigBtn $w={79}>
              <BigIcon><TableFmt /></BigIcon>
              <Line>Als Tabelle</Line>
              <Line>formatieren<Caret s={6} /></Line>
            </BigBtn>
            <BigBtn $w={114}>
              <BigIcon><TableFmt cells /></BigIcon>
              <Line>Zellenformatvorlagen</Line>
              <Line><Caret s={6} /></Line>
            </BigBtn>
          </GroupBody>
          <GroupFoot>Formatvorlagen</GroupFoot>
        </Group>

        <Group $w={97}>
          <GroupBody $pl={5}>
            <Stack $w={90}>
              <ListRow $gapEnd={9}><CellsIcon kind="ins" /><span>Einfügen</span><Caret s={6} /></ListRow>
              <ListRow $gapEnd={9}><CellsIcon kind="del" /><span>Löschen</span><Caret s={6} /></ListRow>
              <ListRow $gapEnd={3}><CellsIcon kind="fmt" /><span>Format</span><Caret s={6} /></ListRow>
            </Stack>
          </GroupBody>
          <GroupFoot>Zellen</GroupFoot>
        </Group>

        <Group $w={190}>
          <GroupBody $pl={5}>
            <Stack $w={34}>
              <Row $h={21}><Slot $w={20}><Sigma /></Slot><Slot $w={14}><Caret s={6} /></Slot></Row>
              <Row $h={24}><Slot $w={20}><FillDown /></Slot><Slot $w={12}><Caret s={6} /></Slot></Row>
              <Row $h={22}><Slot $w={20}><Eraser /></Slot><Slot $w={14}><Caret s={6} /></Slot></Row>
            </Stack>
            <Stack $w={148}>
              <Row $h={69}>
                <BigBtn $w={72} $ml={1}>
                  <BigIcon $pt={4}><SortFilter /></BigIcon>
                  <Line>Sortieren und</Line>
                  <Line>Filtern<Caret s={6} /></Line>
                </BigBtn>
                <BigBtn $w={76}>
                  <BigIcon $pt={4}><Search /></BigIcon>
                  <Line>Suchen und</Line>
                  <Line>Auswählen<Caret s={6} /></Line>
                </BigBtn>
              </Row>
            </Stack>
          </GroupBody>
          <GroupFoot>Bearbeiten</GroupFoot>
        </Group>
        <Collapse><Chevron up /></Collapse>
      </Ribbon>

      <FormulaBar>
        <NameBox>A1<Caret c="#888" s={9} /></NameBox>
        <FxDots><Dots /></FxDots>
        <FxBox>
          <FxSlot><svg width="11" height="11" viewBox="0 0 11 11"><path d="M.5.500l10 10M10.500.500l-10 10" stroke="#bdbdbd" strokeWidth="1.400" /></svg></FxSlot>
          <FxSlot><svg width="13" height="11" viewBox="0 0 13 11"><path d="M1 6l3.500 4L12 1" stroke="#bdbdbd" strokeWidth="1.800" fill="none" /></svg></FxSlot>
          <FxSlot>fx</FxSlot>
        </FxBox>
        <FormulaInput>Beleg<Chevron /></FormulaInput>
      </FormulaBar>

      <SheetWrap>
        <GridClip>
          <Grid>
            <Corner><svg width="12" height="12" viewBox="0 0 12 12"><path d="M12 0v12H0z" fill="#b4b4b4" /></svg></Corner>
            {COLS.map((c, i) => <ColHead key={c} $sel={i === 0}>{c}</ColHead>)}

            <RowHead $sel>1</RowHead>
            <HeadCell>
              <span>Beleg</span><span>Nr.</span>
              <Filter><SortedFilter /></Filter>
              <Selection />
            </HeadCell>
            <HeadCell><span>Zahlungs</span><span>Datum*</span><Filter><Tri dir="d" /></Filter></HeadCell>
            <HeadCell><span>Buchungstext*</span><Filter><Tri dir="d" /></Filter></HeadCell>
            <HeadCell><span>Betrag*</span><Filter><Tri dir="d" /></Filter></HeadCell>
            {COLS.slice(4).map(c => <Cell key={c} />)}

            {Array.from({ length: 35 }, (_, r) => {
              const n = r + 2;
              return (
                <React.Fragment key={n}>
                  <RowHead>{n}</RowHead>
                  {COLS.map((c, i) => {
                    if (n === 2 && c === "B") return <DataCell key={c} $black $al="center">15.02.2018</DataCell>;
                    if (n === 2 && c === "C") return <DataCell key={c} $black>GewSt.Vorauszahlung</DataCell>;
                    if (n === 2 && c === "D") return <DataCell key={c} $black $al="flex-end">425,00 €</DataCell>;
                    return <Cell key={c} $black={i < 4} />;
                  })}
                </React.Fragment>
              );
            })}
          </Grid>
        </GridClip>
        <VScroll>
          <SBtn><Tri dir="u" /></SBtn>
          <VThumb />
          <VTrack />
          <SBtn><Tri dir="d" /></SBtn>
        </VScroll>
      </SheetWrap>

      <TabBar>
        <NavSlot $w={16} />
        <NavSlot $w={26}><Tri dir="l" c={GREEN} /></NavSlot>
        <NavSlot $w={31}><Tri dir="r" c={GREEN} /></NavSlot>
        <NavSlot $w={26}>...</NavSlot>
        <TabSep />
        <Sheet $w={93}>Anlageverm</Sheet>
        <ActiveSheet $w={94}>GewSt.Zahl</ActiveSheet>
        {SHEETS.map(s => <Sheet key={s.t} $w={s.w} $bg={s.bg} $fg={s.fg} $ml={s.ml} $cut={s.cut}>{s.t}</Sheet>)}
        <NavSlot $w={27}>...</NavSlot>
        <NavSlot $w={27}><PlusCircle /></NavSlot>
        <NavSlot $w={30}><Dots /></NavSlot>
        <HScroll>
          <HBtn><Tri dir="l" /></HBtn>
          <HThumb />
          <HTrack />
          <HBtn><Tri dir="r" /></HBtn>
        </HScroll>
      </TabBar>

      <Status>
        <StatusText>Bereit</StatusText>
        <ViewBtn $on $w={38}><NormalView /></ViewBtn>
        <ViewBtn $w={38}><LayoutView /></ViewBtn>
        <ViewBtn $w={38}><BreakView /></ViewBtn>
        <ZoomWrap>
          <ZoomMinus />
          <ZoomTrack><ZoomThumb /></ZoomTrack>
          <ZoomPlus />
        </ZoomWrap>
        <ZoomVal>100 %</ZoomVal>
      </Status>
    </Window>
  );
}
